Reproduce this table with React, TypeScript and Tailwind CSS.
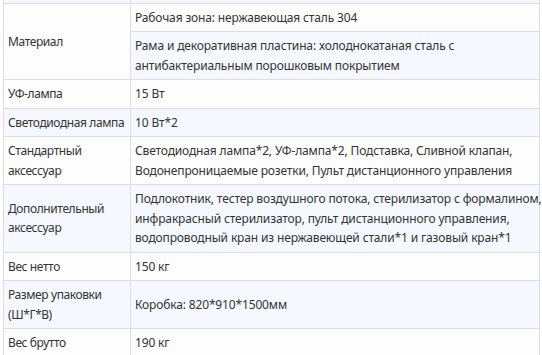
const rows: { label: React.ReactNode; value: React.ReactNode }[] = [
  { label: "УФ-лампа", value: "15 Вт" },
  { label: "Светодиодная лампа", value: "10 Вт*2" },
  {
    label: (
      <>
        Стандартный
        <br />
        аксессуар
      </>
    ),
    value: (
      <>
        Светодиодная лампа*2, УФ-лампа*2, Подставка, Сливной клапан,
        <br />
        Водонепроницаемые розетки, Пульт дистанционного управления
      </>
    ),
  },
  {
    label: (
      <>
        Дополнительный
        <br />
        аксессуар
      </>
    ),
    value: (
      <>
        Подлокотник, тестер воздушного потока, стерилизатор с формалином,
        <br />
        инфракрасный стерилизатор, пульт дистанционного управления,
        <br />
        водопроводный кран из нержавеющей стали*1 и газовый кран*1
      </>
    ),
  },
  { label: "Вес нетто", value: "150 кг" },
  {
    label: (
      <>
        Размер упаковки
        <br />
        (Ш*Г*В)
      </>
    ),
    value: "Коробка: 820*910*1500мм",
  },
  { label: "Вес брутто", value: "190 кг" },
];

const cell = "border border-[#dddddd] px-[4px] py-[4px] align-middle whitespace-nowrap";
const labelCell = cell + " tracking-[-0.4px]";
const valueCell = cell + " tracking-[-0.15px]";

export default function App() {
  return (
    <div
      className="w-[542px] h-[355px] overflow-hidden bg-white text-[12px] leading-[19.5px] text-[#333333]"
      style={{ fontFamily: '"Noto Sans", "Open Sans", sans-serif' }}
    >
      <table className="ml-[3px] w-[537px] border-collapse table-fixed">
        <colgroup>
          <col className="w-[127px]" />
          <col />
        </colgroup>
        <tbody>
          <tr className="bg-[#f5f9ff]">
            <td className="border-x border-b border-[#dddddd] p-0 h-[3px]" />
            <td className="border-x border-b border-[#dddddd] p-0 h-[3px]" />
          </tr>
          <tr className="bg-[#fdfdfd]">
            <td rowSpan={2} className={labelCell}>
              Материал
            </td>
            <td className={valueCell}>Рабочая зона: нержавеющая сталь 304</td>
          </tr>
          <tr className="bg-[#f5f9ff]">
            <td className={valueCell}>
              Рама и декоративная пластина: холоднокатаная сталь с
              <br />
              антибактериальным порошковым покрытием
            </td>
          </tr>
          {rows.map((r, i) => (
            <tr key={i} className={i % 2 === 0 ? "bg-[#fdfdfd]" : "bg-[#f5f9ff]"}>
              <td className={labelCell}>{r.label}</td>
              <td className={valueCell}>{r.value}</td>
            </tr>
          ))}
        </tbody>
      </table>
    </div>
  );
}
